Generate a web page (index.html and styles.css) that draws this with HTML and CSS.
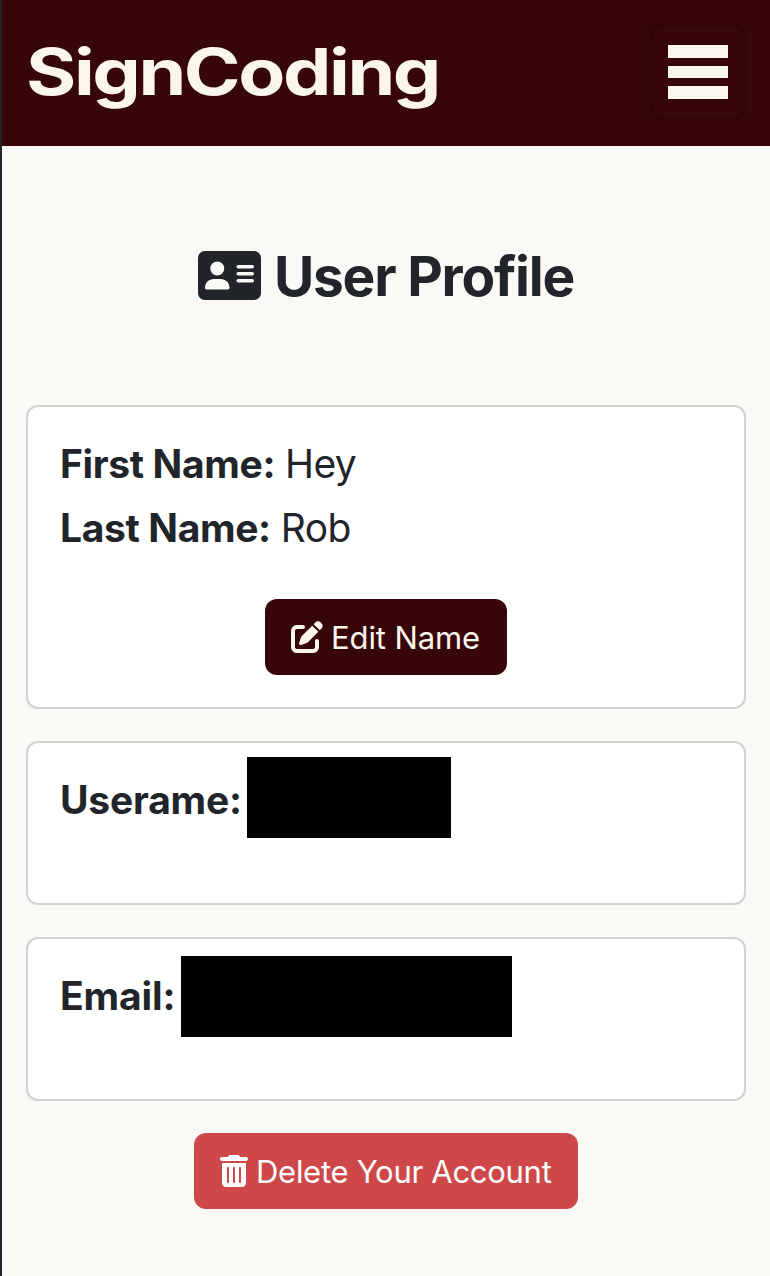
FILE: index.html
```html
<!DOCTYPE html>
<html lang="en">
<head>
<meta charset="utf-8">
<title>SignCoding</title>
<link rel="stylesheet" href="styles.css">
</head>
<body>
<header class="navbar">
  <a class="brand">SignCoding</a>
  <button class="toggler" aria-label="Menu"><span class="bar"></span><span class="bar bar-mid"></span><span class="bar"></span></button>
</header>
<main class="content">
  <h1 class="title">
    <svg class="title-icon" viewBox="0 32 576 448"><path fill-rule="evenodd" d="M64 32C28.700 32 0 60.700 0 96V416c0 35.300 28.700 64 64 64H512c35.300 0 64-28.700 64-64V96c0-35.300-28.700-64-64-64H64zm80 256h64c44.200 0 80 35.800 80 80c0 8.800-7.200 16-16 16H80c-8.800 0-16-7.200-16-16c0-44.200 35.800-80 80-80zm-32-96a64 64 0 1 1 128 0a64 64 0 1 1-128 0zm256-32H496c8.800 0 16 7.200 16 16s-7.200 16-16 16H368c-8.800 0-16-7.200-16-16s7.200-16 16-16zm0 64H496c8.800 0 16 7.200 16 16s-7.200 16-16 16H368c-8.800 0-16-7.200-16-16s7.200-16 16-16zm0 64H496c8.800 0 16 7.200 16 16s-7.200 16-16 16H368c-8.800 0-16-7.200-16-16s7.200-16 16-16z"/></svg>
    <span class="title-text">User Profile</span>
  </h1>
  <section class="card">
    <p class="row"><strong class="label first">First Name:</strong><span class="value hey">Hey</span></p>
    <p class="row"><strong class="label last">Last Name:</strong><span class="value rob">Rob</span></p>
    <button class="btn btn-edit">
      <svg class="edit-icon" viewBox="0 0 512 512"><path d="M471.600 21.700c-21.900-21.900-57.300-21.900-79.200 0L362.300 51.700l97.900 97.900 30.100-30.100c21.900-21.900 21.900-57.300 0-79.200L471.600 21.700zm-299.200 220c-6.100 6.100-10.800 13.600-13.500 21.900l-29.600 88.800c-2.900 8.600-.6 18.100 5.800 24.600s15.900 8.700 24.600 5.800l88.800-29.600c8.200-2.700 15.700-7.400 21.900-13.500L437.700 172.300 339.700 74.300 172.400 241.700zM96 64C43 64 0 107 0 160V416c0 53 43 96 96 96H352c53 0 96-43 96-96V320c0-17.700-14.300-32-32-32s-32 14.300-32 32v96c0 17.700-14.300 32-32 32H96c-17.700 0-32-14.300-32-32V160c0-17.700 14.300-32 32-32h96c17.700 0 32-14.300 32-32s-14.300-32-32-32H96z"/></svg>
      <span class="btn-text edit-text">Edit Name</span>
    </button>
  </section>
  <section class="card card-short">
    <p class="row"><strong class="label user">Userame:</strong></p>
    <span class="redacted redacted-user"></span>
  </section>
  <section class="card card-short">
    <p class="row"><strong class="label email">Email:</strong></p>
    <span class="redacted redacted-email"></span>
  </section>
  <button class="btn btn-delete">
    <svg class="trash-icon" viewBox="0 0 448 512"><path fill-rule="evenodd" d="M135.200 17.700C140.600 6.800 151.700 0 163.800 0H284.200c12.100 0 23.200 6.800 28.600 17.700L320 32h96c17.700 0 32 14.300 32 32s-14.300 32-32 32H32C14.300 96 0 81.700 0 64S14.300 32 32 32h96l7.200-14.300zM32 128H416V448c0 35.300-28.700 64-64 64H96c-35.300 0-64-28.700-64-64V128zm96 64c-8.800 0-16 7.200-16 16V432c0 8.800 7.200 16 16 16s16-7.200 16-16V208c0-8.800-7.200-16-16-16zm96 0c-8.800 0-16 7.200-16 16V432c0 8.800 7.200 16 16 16s16-7.200 16-16V208c0-8.800-7.200-16-16-16zm96 0c-8.800 0-16 7.200-16 16V432c0 8.800 7.200 16 16 16s16-7.200 16-16V208c0-8.800-7.200-16-16-16z"/></svg>
    <span class="btn-text delete-text">Delete Your Account</span>
  </button>
</main>
</body>
</html>
```

FILE: styles.css
```css
* { box-sizing: border-box; }
body {
  margin: 0;
  min-height: 1276px;
  border-left: 2px solid #212529;
  background: #faf9f5;
  color: #212529;
  font-family: Inter, "Liberation Sans", sans-serif;
}
svg { display: block; flex: none; fill: currentColor; }
.navbar {
  display: flex;
  align-items: center;
  justify-content: space-between;
  height: 146px;
  padding: 0 24px 2px 24px;
  background: #360609;
}
.brand {
  color: #faf6ec;
  font-size: 64px;
  font-weight: 750;
  line-height: 80px;
  letter-spacing: -2px;
  white-space: nowrap;
  transform: scaleX(1.2);
  transform-origin: left;
}
.toggler {
  display: flex;
  flex-direction: column;
  align-items: center;
  gap: 8px;
  width: 96px;
  height: 96px;
  padding: 19px 0 0;
  border: 2px solid #300508;
  border-radius: 12px;
  background: none;
}
.bar { width: 60px; height: 13px; background: #faf6ec; }
.bar-mid { height: 12px; }
.content {
  display: flex;
  flex-direction: column;
  align-items: center;
  padding: 96px 24px 0;
}
.title {
  display: flex;
  align-items: center;
  gap: 13px;
  height: 67px;
  margin: 0 0 96px;
  font-size: 55px;
  font-weight: 700;
  white-space: nowrap;
}
.title-icon { width: 63px; height: 49px; }
.title-text { letter-spacing: -1.2px; }
.card {
  position: relative;
  display: flex;
  flex-direction: column;
  align-items: center;
  width: 720px;
  height: 304px;
  margin-bottom: 32px;
  padding: 32px;
  border: 2px solid #d2d2d2;
  border-radius: 12px;
  background: #fff;
}
.card-short { height: 164px; }
.row {
  display: flex;
  align-self: stretch;
  gap: 10px;
  height: 48px;
  margin: 0 0 16px;
  font-size: 39px;
  line-height: 50px;
  white-space: nowrap;
}
.label { font-weight: 700; letter-spacing: -0.35px; }
.user { letter-spacing: -0.2px; }
.email { letter-spacing: -0.1px; }
.value { letter-spacing: -0.6px; }
.redacted { position: absolute; height: 81px; background: #000; }
.redacted-user { left: 219px; top: 14px; width: 204px; }
.redacted-email { left: 153px; top: 17px; width: 331px; }
.btn {
  display: flex;
  align-items: center;
  height: 76px;
  padding: 0 26px;
  border: 0;
  border-radius: 12px;
  font: 400 31px/48px Inter, "Liberation Sans", sans-serif;
  white-space: nowrap;
}
.btn-text { padding-top: 2px; }
.btn-edit { width: 242px; margin-top: 32px; gap: 8px; background: #360609; color: #faf6ec; }
.btn-delete { width: 384px; gap: 8px; background: #ce4849; color: #fff; }
.edit-text { letter-spacing: -0.1px; }
.delete-text { letter-spacing: -0.28px; }
.edit-icon { width: 32px; height: 32px; }
.trash-icon { width: 28px; height: 32px; }
```
